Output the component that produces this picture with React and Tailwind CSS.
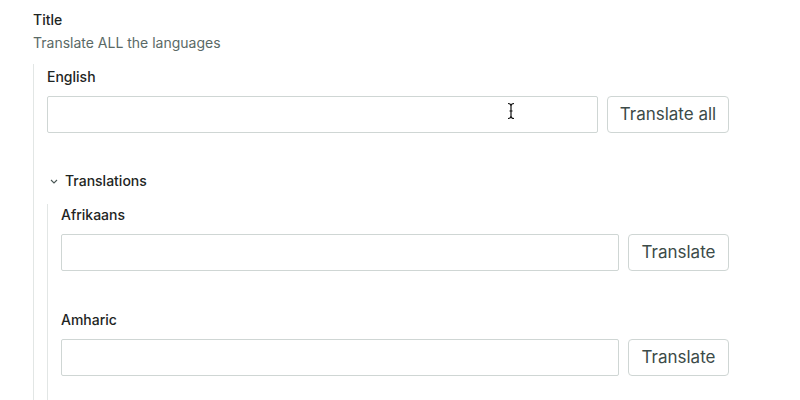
import React from "react";

function Row({ label }) {
  return (
    <div className="flex flex-col">
      <div className="text-[14px] leading-[20px] font-[550] text-[#1e2523]">{label}</div>
      <div className="mt-[9px] flex items-stretch gap-[9px]">
        <input className="h-[37px] w-[558px] rounded-[2px] border border-[#cfd6d4] bg-white outline-none" />
        <button className="h-[37px] w-[101px] rounded-[4px] border border-[#cfd6d4] bg-white text-[17px] text-[#3c4b48]">
          Translate
        </button>
      </div>
    </div>
  );
}

export default function App() {
  return (
    <div className="relative h-[400px] w-[800px] overflow-hidden bg-white pl-[33px] pt-[10px]" style={{ fontFamily: "Inter, 'Noto Sans', sans-serif" }}>
      <div className="w-[697px]">
        <div className="text-[14px] leading-[20px] font-[550] text-[#1e2523]">Title</div>
        <div className="mt-[3px] text-[14px] leading-[20px] text-[#5a6966]">Translate ALL the languages</div>
        <div className="mt-[11px] border-l border-[#e2e6e5] pl-[13px] pt-[3px] pb-[40px]">
          <div className="flex flex-col">
            <div className="text-[14px] leading-[20px] font-[550] text-[#1e2523]">English</div>
            <div className="mt-[9px] flex items-stretch gap-[9px]">
              <input className="h-[37px] w-[551px] rounded-[2px] border border-[#cfd6d4] bg-white outline-none" />
              <button className="h-[37px] w-[122px] rounded-[4px] border border-[#cfd6d4] bg-white text-[17px] text-[#3c4b48]">
                Translate all
              </button>
            </div>
          </div>
          <div className="mt-[38px] flex items-center gap-[4px]">
            <svg width="14" height="20" viewBox="0 0 14 20">
              <polyline points="4,9 7,12 10,9" fill="none" stroke="#4a5755" strokeWidth="1.1" />
            </svg>
            <span className="text-[14px] leading-[20px] font-[550] text-[#1e2523]">Translations</span>
          </div>
          <div className="mt-[13px] flex flex-col gap-[39px] border-l border-[#e2e6e5] pl-[13px] pt-[1px] pb-[40px]">
            <Row label="Afrikaans" />
            <Row label="Amharic" />
          </div>
        </div>
      </div>
      <svg className="absolute left-[506px] top-[102px]" width="10" height="18" viewBox="0 0 10 18">
        <path d="M2 1.5 Q5 1.5 5 4 Q5 1.5 8 1.5 M5 4 V14 M2 16.5 Q5 16.5 5 14 Q5 16.5 8 16.5 M3.5 9 H6.5" fill="none" stroke="#ffffff" strokeWidth="3" />
        <path d="M2 1.5 Q5 1.5 5 4 Q5 1.5 8 1.5 M5 4 V14 M2 16.5 Q5 16.5 5 14 Q5 16.5 8 16.5 M3.5 9 H6.5" fill="none" stroke="#111" strokeWidth="1.2" />
      </svg>
    </div>
  );
}
